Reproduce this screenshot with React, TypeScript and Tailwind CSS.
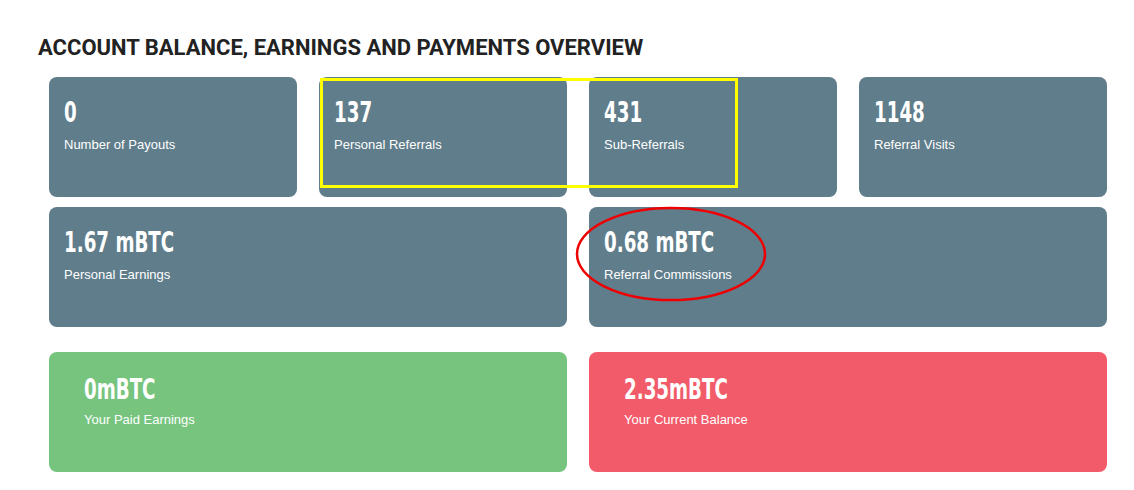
import React from "react";

const NUM_FONT = {
  fontFamily: '"DejaVu Sans Condensed", "Liberation Sans", sans-serif',
};

type Stat = { value: string; label: string };

const topStats: Stat[] = [
  { value: "0", label: "Number of Payouts" },
  { value: "137", label: "Personal Referrals" },
  { value: "431", label: "Sub-Referrals" },
  { value: "1148", label: "Referral Visits" },
];

const earnStats: Stat[] = [
  { value: "1.67 mBTC", label: "Personal Earnings" },
  { value: "0.68 mBTC", label: "Referral Commissions" },
];

// condensed bold figure, squeezed to sit like the narrow display face
function Figure({ children }: { children: React.ReactNode }) {
  return (
    <div className="h-[36px]">
      <span
        className="inline-block origin-left scale-x-[0.7] whitespace-nowrap text-[29px] font-bold leading-[36px]"
        style={NUM_FONT}
      >
        {children}
      </span>
    </div>
  );
}

function Card({ stat }: { stat: Stat }) {
  return (
    <div className="h-[120px] rounded-[8px] bg-[#607d8b] px-[15px] pt-[17px] text-white">
      <Figure>{stat.value}</Figure>
      <div className="mt-[6px] text-[13px] leading-[18px]">{stat.label}</div>
    </div>
  );
}

export default function App() {
  return (
    <div className="relative h-[490px] w-[1134px] bg-white px-[38px] pt-[35px] font-['Liberation_Sans',Arial,sans-serif]">
      <h2 className="text-[22px] font-bold leading-[26px] uppercase text-[#222222] font-['Roboto',sans-serif]">
        Account Balance, Earnings and Payments Overview
      </h2>

      <div className="ml-[11px] mt-[16px] w-[1058px]">
        <div className="grid grid-cols-4 gap-[22px]">
          {topStats.map((s) => (
            <Card key={s.label} stat={s} />
          ))}
        </div>
        <div className="mt-[10px] grid grid-cols-2 gap-[22px]">
          {earnStats.map((s) => (
            <Card key={s.label} stat={s} />
          ))}
        </div>
        <div className="mt-[25px] grid grid-cols-2 gap-[22px]">
          <div className="h-[120px] rounded-[8px] bg-[#76c47e] px-[35px] pt-[19px] text-white">
            <Figure>0mBTC</Figure>
            <div className="mt-[4px] text-[13px] leading-[18px]">Your Paid Earnings</div>
          </div>
          <div className="h-[120px] rounded-[8px] bg-[#f25b69] px-[35px] pt-[19px] text-white">
            <Figure>2.35mBTC</Figure>
            <div className="mt-[4px] text-[13px] leading-[18px]">Your Current Balance</div>
          </div>
        </div>
      </div>

      {/* annotation marks drawn over the cards */}
      <div className="pointer-events-none absolute left-[320px] top-[78px] h-[110px] w-[418px] border-[3px] border-[#ffff00]" />
      <svg
        className="pointer-events-none absolute left-[574px] top-[205px]"
        width="194"
        height="98"
        viewBox="0 0 194 98"
      >
        <ellipse cx="97" cy="49" rx="94" ry="46" fill="none" stroke="#ee0000" strokeWidth="2.5" />
      </svg>
    </div>
  );
}
